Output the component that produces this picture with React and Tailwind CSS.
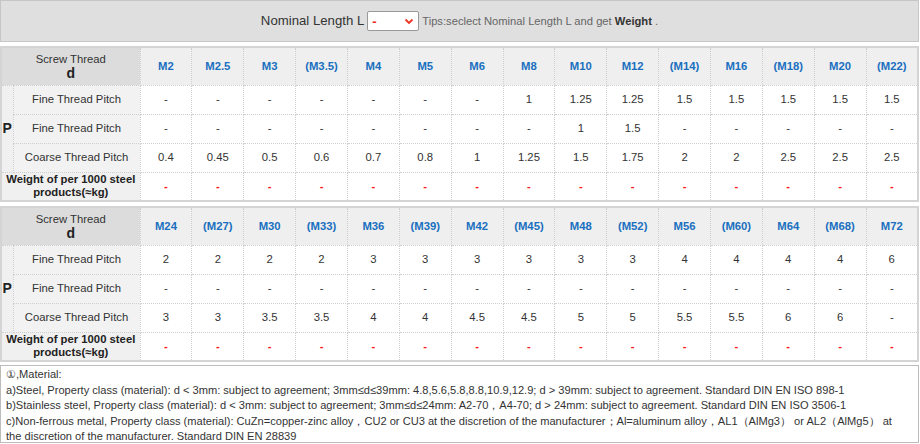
import React from 'react';

const table1 = {
  sizes: ['M2', 'M2.5', 'M3', '(M3.5)', 'M4', 'M5', 'M6', 'M8', 'M10', 'M12', '(M14)', 'M16', '(M18)', 'M20', '(M22)'],
  fine1: ['-', '-', '-', '-', '-', '-', '-', '1', '1.25', '1.25', '1.5', '1.5', '1.5', '1.5', '1.5'],
  fine2: ['-', '-', '-', '-', '-', '-', '-', '-', '1', '1.5', '-', '-', '-', '-', '-'],
  coarse: ['0.4', '0.45', '0.5', '0.6', '0.7', '0.8', '1', '1.25', '1.5', '1.75', '2', '2', '2.5', '2.5', '2.5'],
};

const table2 = {
  sizes: ['M24', '(M27)', 'M30', '(M33)', 'M36', '(M39)', 'M42', '(M45)', 'M48', '(M52)', 'M56', '(M60)', 'M64', '(M68)', 'M72'],
  fine1: ['2', '2', '2', '2', '3', '3', '3', '3', '3', '3', '4', '4', '4', '4', '6'],
  fine2: ['-', '-', '-', '-', '-', '-', '-', '-', '-', '-', '-', '-', '-', '-', '-'],
  coarse: ['3', '3', '3.5', '3.5', '4', '4', '4.5', '4.5', '5', '5', '5.5', '5.5', '6', '6', '-'],
};

const cell = 'border border-dotted border-[#cfcfcf] text-center align-middle p-0';

const PitchTable = ({ data }) => (
  <table className="w-full table-fixed border-collapse border-2 border-solid border-[#d4d4d4] text-[11.3px] text-[#333]">
    <colgroup>
      <col className="w-[12px]" />
      <col className="w-[127px]" />
      {data.sizes.map((s) => (
        <col key={s} />
      ))}
    </colgroup>
    <tbody>
      <tr className="h-[38px]">
        <td colSpan={2} className={`${cell} bg-[#dcdcdc] leading-[14px]`}>
          <div>Screw Thread</div>
          <div className="text-[14px] font-bold text-[#222]">d</div>
        </td>
        {data.sizes.map((s) => (
          <td key={s} className={`${cell} bg-[#efefef] font-bold text-[#1a6fc0]`}>{s}</td>
        ))}
      </tr>
      <tr className="h-[29px]">
        <td rowSpan={3} className={`${cell} bg-[#f0f0f0] text-[14px] font-bold text-[#222]`}>P</td>
        <td className={`${cell} bg-[#f2f2f2]`}>Fine Thread Pitch</td>
        {data.fine1.map((v, i) => (
          <td key={i} className={`${cell} bg-white`}>{v}</td>
        ))}
      </tr>
      <tr className="h-[29px]">
        <td className={`${cell} bg-[#f2f2f2]`}>Fine Thread Pitch</td>
        {data.fine2.map((v, i) => (
          <td key={i} className={`${cell} bg-white`}>{v}</td>
        ))}
      </tr>
      <tr className="h-[29px]">
        <td className={`${cell} bg-[#f2f2f2]`}>Coarse Thread Pitch</td>
        {data.coarse.map((v, i) => (
          <td key={i} className={`${cell} bg-white`}>{v}</td>
        ))}
      </tr>
      <tr className="h-[29px]">
        <td colSpan={2} className={`${cell} bg-[#f0f0f0] font-bold text-[#222] leading-[13px]`}>
          Weight of per 1000 steel
          <br />
          products(≈kg)
        </td>
        {data.sizes.map((s) => (
          <td key={s} className={`${cell} bg-white text-[#ff1a1a] font-bold`}>-</td>
        ))}
      </tr>
    </tbody>
  </table>
);

export default function App() {
  return (
    <div className="w-[920px] h-[444px] bg-white pr-[1px] font-['Liberation_Sans',Arial,sans-serif] overflow-hidden">
      <div className="h-[42px] bg-[#dfdfdf] border border-[#c6c6c6] flex items-center justify-center gap-[3px]">
        <span className="text-[13.2px] text-[#333]">Nominal Length L</span>
        <div className="w-[52px] h-[20px] bg-white border border-[#999] rounded-[2px] flex items-center justify-between px-[4px]">
          <span className="text-[13px] text-[#ee2222] font-bold leading-none">-</span>
          <svg width="10" height="7" viewBox="0 0 10 7" fill="none">
            <path d="M1.5 1.5 L5 5 L8.5 1.5" stroke="#ee3322" strokeWidth="1.8" />
          </svg>
        </div>
        <span className="text-[11.2px] text-[#666]">
          Tips:seclect Nominal Length L and get <b className="text-[#333]">Weight</b> .
        </span>
      </div>

      <div className="mt-[4px]">
        <PitchTable data={table1} />
      </div>
      <div className="mt-[4px]">
        <PitchTable data={table2} />
      </div>

      <div className="mt-[3px] h-[78px] border border-[#bcbcbc] px-[5px] pt-[1px] text-[11.1px] leading-[15.5px] text-[#333]">
        <div>①,Material:</div>
        <div>a)Steel, Property class (material): d &lt; 3mm: subject to agreement; 3mm≤d≤39mm: 4.8,5.6,5.8,8.8,10.9,12.9; d &gt; 39mm: subject to agreement. Standard DIN EN ISO 898-1</div>
        <div>b)Stainless steel, Property class (material): d &lt; 3mm: subject to agreement; 3mm≤d≤24mm: A2-70，A4-70; d &gt; 24mm: subject to agreement. Standard DIN EN ISO 3506-1</div>
        <div>
          c)Non-ferrous metal, Property class (material): CuZn=copper-zinc alloy，CU2 or CU3 at the discretion of the manufacturer；Al=aluminum alloy，AL1（AlMg3） or AL2（AlMg5） at
          <br />
          the discretion of the manufacturer. Standard DIN EN 28839
        </div>
      </div>
    </div>
  );
}
